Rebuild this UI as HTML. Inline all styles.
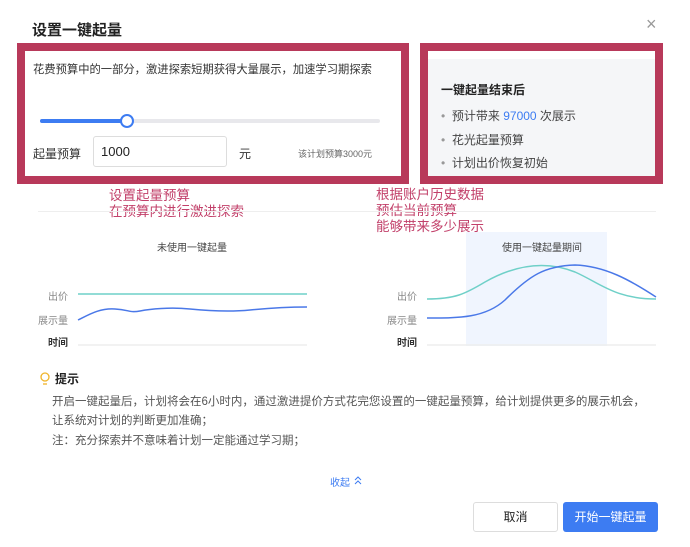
<!DOCTYPE html>
<html><head><meta charset="utf-8"><style>
*{margin:0;padding:0;box-sizing:border-box}
body{width:690px;height:547px;background:#fff;font-family:"Liberation Sans","Noto Sans CJK SC",sans-serif;color:#333;position:relative;overflow:hidden}
.a{position:absolute;white-space:nowrap}
.box{position:absolute;border:8px solid #b8395a}
.red{color:#c2406a;font-size:13.5px;line-height:16px}
.lbl{font-size:10px;color:#888}
</style></head><body>
<div class="a" style="left:32px;top:19px;font-size:15px;font-weight:bold;color:#222">设置一键起量</div>
<div class="a" style="left:646px;top:14px;font-size:18px;color:#999">×</div>

<div class="box" style="left:17px;top:43px;width:392px;height:141px"></div>
<div class="a" style="left:33px;top:61px;font-size:11.3px;color:#333">花费预算中的一部分，激进探索短期获得大量展示，加速学习期探索</div>
<div class="a" style="left:40px;top:119px;width:340px;height:4px;background:#e8e8ec;border-radius:2px"></div>
<div class="a" style="left:40px;top:119px;width:88px;height:4px;background:#3d7cf2;border-radius:2px"></div>
<div class="a" style="left:120px;top:114px;width:14px;height:14px;border:2px solid #3d7cf2;background:#fff;border-radius:50%"></div>
<div class="a" style="left:33px;top:145px;font-size:12px">起量预算</div>
<div class="a" style="left:93px;top:136px;width:134px;height:31px;border:1px solid #ddd;border-radius:3px;font-size:13px;padding:7px 7px;color:#222">1000</div>
<div class="a" style="left:239px;top:145px;font-size:12px">元</div>
<div class="a" style="left:298px;top:147px;font-size:9px;color:#666">该计划预算3000元</div>

<div class="box" style="left:420px;top:43px;width:243px;height:141px;background:#f5f6f8"></div>
<div class="a" style="left:428px;top:51px;width:227px;height:8px;background:#fff"></div>
<div class="a" style="left:441px;top:81px;font-size:12px;font-weight:bold;color:#222">一键起量结束后</div>
<div class="a" style="left:441px;top:107px;font-size:12px;color:#444"><span style="color:#999">•</span>&nbsp; 预计带来 <span style="color:#3d7cf2">97000</span> 次展示</div>
<div class="a" style="left:441px;top:131px;font-size:12px;color:#444"><span style="color:#999">•</span>&nbsp; 花光起量预算</div>
<div class="a" style="left:441px;top:154px;font-size:12px;color:#444"><span style="color:#999">•</span>&nbsp; 计划出价恢复初始</div>

<div class="a red" style="left:109px;top:188px">设置起量预算<br>在预算内进行激进探索</div>
<div class="a red" style="left:376px;top:187px">根据账户历史数据<br>预估当前预算<br>能够带来多少展示</div>
<div class="a" style="left:38px;top:211px;width:618px;height:1px;background:#eee"></div>

<div class="a" style="left:466px;top:232px;width:141px;height:114px;background:#f0f5fe"></div>
<div class="a" style="left:157px;top:239px;font-size:10px;color:#444">未使用一键起量</div>
<div class="a" style="left:502px;top:239px;font-size:10px;color:#444">使用一键起量期间</div>
<div class="a lbl" style="left:48px;top:288px">出价</div>
<div class="a lbl" style="left:38px;top:312px">展示量</div>
<div class="a" style="left:48px;top:334px;font-size:10px;font-weight:bold;color:#333">时间</div>
<div class="a lbl" style="left:397px;top:288px">出价</div>
<div class="a lbl" style="left:387px;top:312px">展示量</div>
<div class="a" style="left:397px;top:334px;font-size:10px;font-weight:bold;color:#333">时间</div>
<svg class="a" style="left:0;top:0" width="690" height="547">
<line x1="78" y1="294" x2="307" y2="294" stroke="#6fd0c8" stroke-width="1.5"/>
<path d="M78 320 C90 314 100 308 115 309 S130 313 140 311 S170 307 190 309 S230 312 250 310 S290 307 307 307" fill="none" stroke="#4a78e8" stroke-width="1.5"/>
<line x1="78" y1="345" x2="307" y2="345" stroke="#eee" stroke-width="1.5"/>
<path d="M427 299 C455 299 465 294 485 282 C515 265 545 260 575 272 C600 283 615 299 656 299" fill="none" stroke="#6fd0c8" stroke-width="1.5"/>
<path d="M427 318 C460 318 485 318 505 300 C530 275 545 266 575 265 C605 266 630 280 656 297" fill="none" stroke="#4a78e8" stroke-width="1.5"/>
<line x1="427" y1="345" x2="656" y2="345" stroke="#eee" stroke-width="1.5"/>
<circle cx="45" cy="377" r="4" fill="none" stroke="#f0b429" stroke-width="1.3"/>
<line x1="43" y1="384" x2="47" y2="384" stroke="#f0b429" stroke-width="1.3"/>
<path d="M355 480 l3 -3 l3 3 M355 484 l3 -3 l3 3" fill="none" stroke="#3d7cf2" stroke-width="1"/>
</svg>
<div class="a" style="left:55px;top:370px;font-size:12px;font-weight:bold;color:#222">提示</div>
<div class="a" style="left:52px;top:393px;font-size:11.5px;line-height:19px;color:#555">开启一键起量后，计划将会在6小时内，通过激进提价方式花完您设置的一键起量预算，给计划提供更多的展示机会，<br>让系统对计划的判断更加准确；</div>
<div class="a" style="left:52px;top:432px;font-size:11.5px;line-height:19px;color:#555">注：充分探索并不意味着计划一定能通过学习期；</div>
<div class="a" style="left:330px;top:474px;font-size:10px;color:#3d7cf2">收起</div>
<div class="a" style="left:473px;top:502px;width:85px;height:30px;border:1px solid #ddd;border-radius:3px;font-size:12px;text-align:center;line-height:28px;color:#222">取消</div>
<div class="a" style="left:563px;top:502px;width:95px;height:30px;background:#3d7cf2;border-radius:3px;font-size:12px;text-align:center;line-height:30px;color:#fff">开始一键起量</div>
</body></html>
